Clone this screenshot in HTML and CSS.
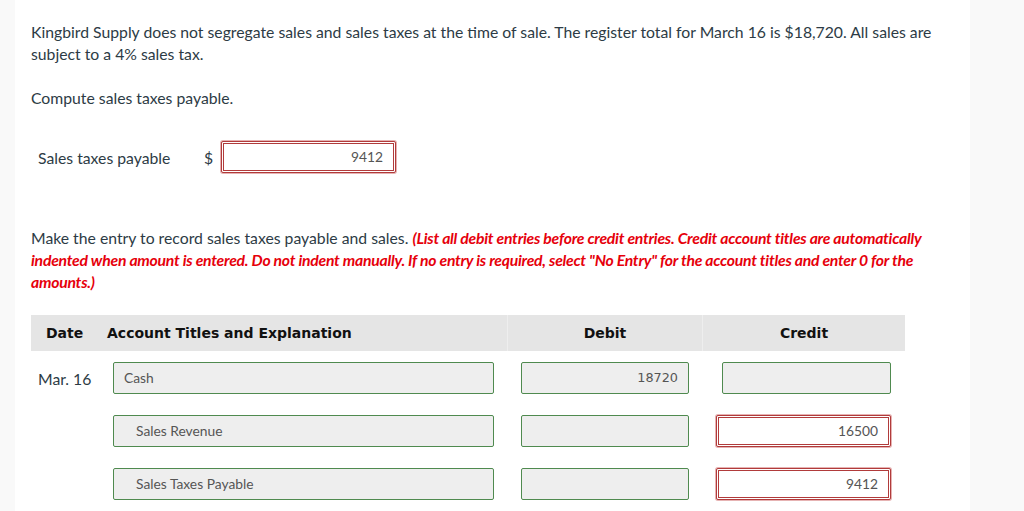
FILE: index.html
```html
<!DOCTYPE html>
<html lang="en">
<head>
    <meta charset="UTF-8">
    <meta name="viewport" content="width=device-width, initial-scale=1.0">
    <title>Sales Taxes Payable</title>
    <link rel="stylesheet" href="styles.css">
</head>
<body>
    <div class="side-left"></div>
    <div class="main-content">
        <p class="question">Kingbird Supply does not segregate sales and sales taxes at the time of sale. The register total for March 16 is $18,720. All sales are subject to a 4% sales tax.</p>
        <p class="question">Compute sales taxes payable.</p>

        <div class="answer-row">
            <span class="answer-label">Sales taxes payable</span>
            <span class="currency">$</span>
            <div class="field wrong amount-field">9412</div>
        </div>

        <p class="question">Make the entry to record sales taxes payable and sales. <em class="note">(List all debit entries before credit entries. Credit account titles are automatically indented when amount is entered. Do not indent manually. If no entry is required, select "No Entry" for the account titles and enter 0 for the amounts.)</em></p>

        <div class="journal">
            <div class="journal-head">
                <div class="col-date">Date</div>
                <div class="col-account">Account Titles and Explanation</div>
                <div class="col-debit">Debit</div>
                <div class="col-credit">Credit</div>
            </div>

            <div class="journal-row">
                <div class="col-date">Mar. 16</div>
                <div class="col-account"><div class="field ok account">Cash</div></div>
                <div class="col-debit"><div class="field ok number">18720</div></div>
                <div class="col-credit"><div class="field ok number"></div></div>
            </div>

            <div class="journal-row">
                <div class="col-date"></div>
                <div class="col-account"><div class="field ok account indent">Sales Revenue</div></div>
                <div class="col-debit"><div class="field ok number"></div></div>
                <div class="col-credit"><div class="field wrong credit-wrong">16500</div></div>
            </div>

            <div class="journal-row">
                <div class="col-date"></div>
                <div class="col-account"><div class="field ok account indent">Sales Taxes Payable</div></div>
                <div class="col-debit"><div class="field ok number"></div></div>
                <div class="col-credit"><div class="field wrong credit-wrong">9412</div></div>
            </div>
        </div>
    </div>
    <div class="side-right"></div>
</body>
</html>
```

FILE: styles.css
```css
body {
    margin: 0;
    display: flex;
    min-height: 511px;
    font-family: Lato, "Open Sans", sans-serif;
    color: #2d3b45;
    background-color: #fff;
    overflow: hidden;
}
.side-left {
    width: 15px;
    background-color: #f9f9f9;
}
.side-right {
    width: 54px;
    background-color: #f9f9f9;
}
.main-content {
    flex: 1;
    padding: 21px 25px 0 16px;
}
.question {
    margin: 0 0 22px;
    font-size: 15.75px;
    line-height: 22px;
}
.note {
    color: #e6000b;
    font-weight: bold;
    letter-spacing: -0.25px;
}
.answer-row {
    display: flex;
    align-items: center;
    margin: 32px 0 54px 7px;
    font-size: 15.75px;
}
.answer-label {
    width: 166px;
}
.currency {
    width: 17px;
}
.field {
    box-sizing: border-box;
    height: 32px;
    line-height: 30px;
    font-size: 13.8px;
    color: #555;
    border-radius: 2px;
}
.field.ok {
    background-color: #eee;
    border: 1px solid #4f8a4f;
}
.field.wrong {
    background-color: #fff;
    border: 3px double #b13b3b;
    box-shadow: 0 0 0 1px #e6b3b3;
    line-height: 26px;
    text-align: right;
    padding-right: 10px;
}
.amount-field {
    width: 175px;
}
.journal {
    width: 874px;
    margin-top: 22px;
}
.journal-head,
.journal-row {
    display: grid;
    grid-template-columns: 69px 408px 195px 202px;
}
.journal-head {
    height: 36px;
    align-items: center;
    background-color: #e5e5e5;
    font-family: "DejaVu Sans", Verdana, sans-serif;
    font-weight: bold;
    font-size: 14px;
    color: #111;
}
.journal-head .col-date {
    padding-left: 15px;
}
.journal-head .col-account {
    padding-left: 7px;
    height: 36px;
    line-height: 36px;
    border-right: 1px solid #eee;
}
.journal-head .col-debit,
.journal-head .col-credit {
    text-align: center;
}
.journal-head .col-debit {
    height: 36px;
    line-height: 36px;
    border-right: 1px solid #eee;
}
.journal-row {
    align-items: center;
    margin-top: 11px;
}
.journal-row + .journal-row {
    margin-top: 21px;
}
.journal-row .col-date {
    padding-left: 7px;
    font-size: 15.75px;
}
.journal-row .col-account {
    padding-left: 13px;
}
.journal-row .col-debit {
    padding-left: 13px;
}
.journal-row .col-credit {
    padding-left: 19px;
}
.account {
    width: 381px;
    padding-left: 10px;
}
.account.indent {
    padding-left: 22px;
}
.number {
    width: 168px;
    text-align: right;
    padding-right: 10px;
    font-family: "DejaVu Sans", Verdana, sans-serif;
    font-size: 12.8px;
}
.col-credit .number {
    width: 169px;
}
.credit-wrong {
    width: 175px;
    margin-left: -6px;
}
```
